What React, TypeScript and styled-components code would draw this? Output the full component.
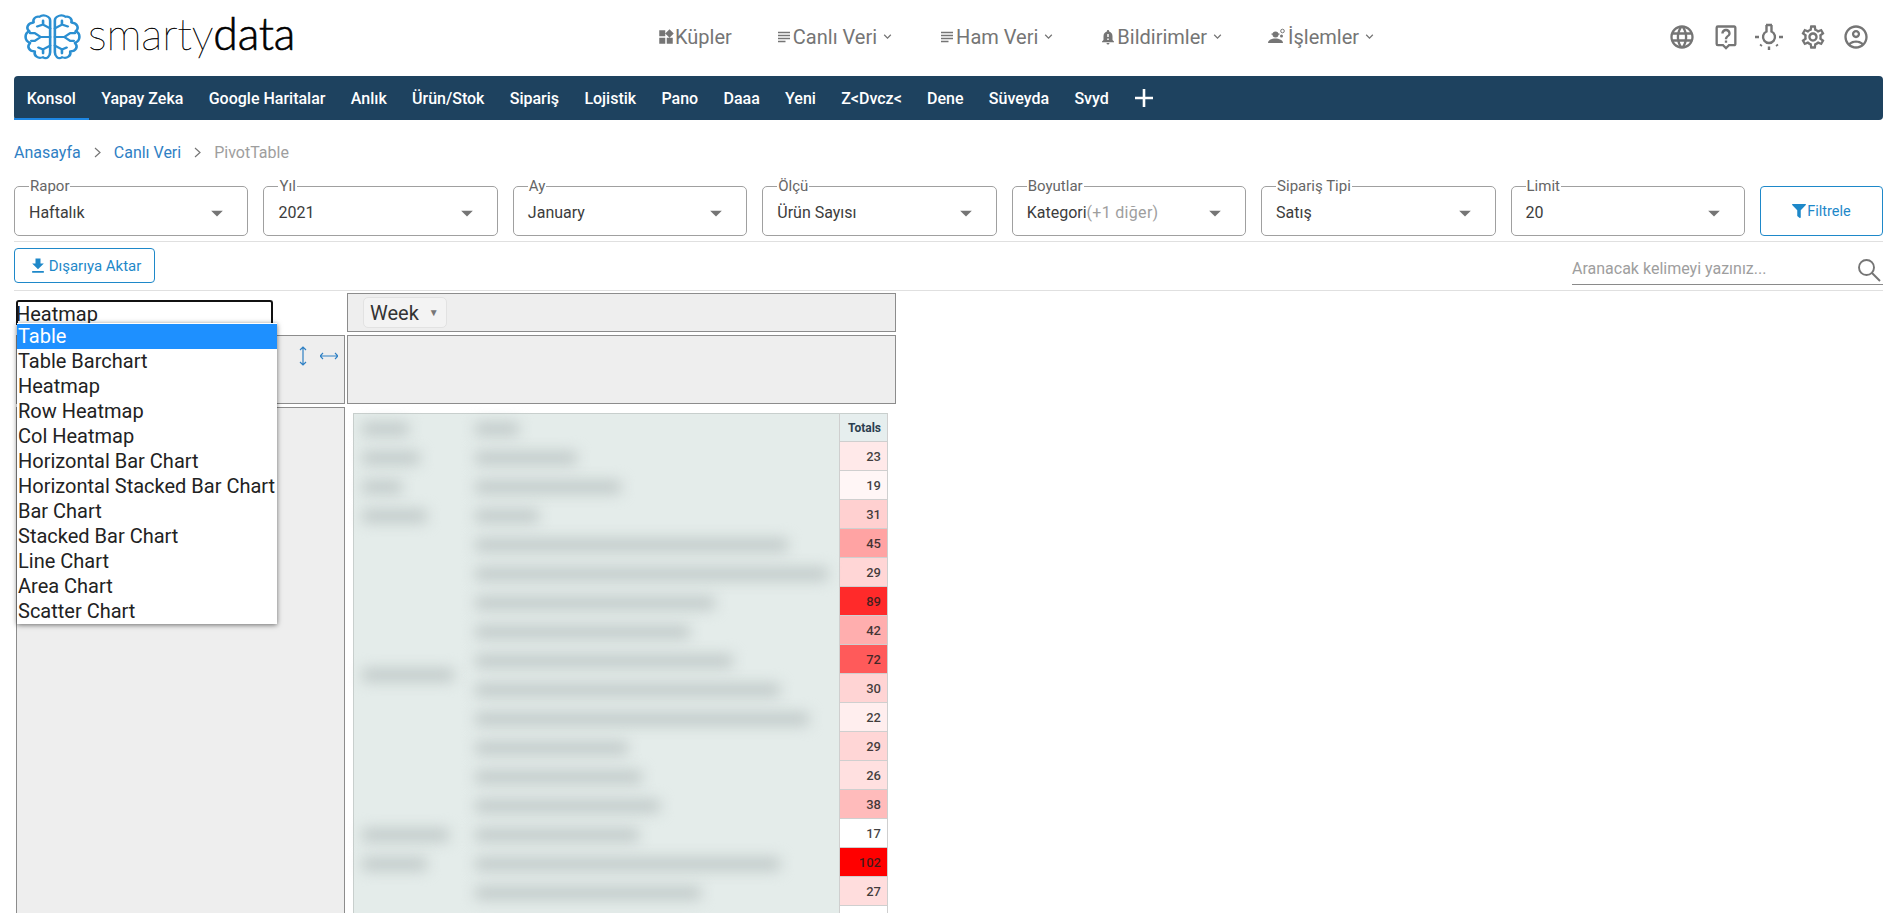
import React from 'react';
import styled, { createGlobalStyle } from 'styled-components';
import {
  MdArrowDropDown,
  MdFileDownload,
  MdKeyboardArrowDown,
  MdNotificationImportant,
  MdOutlineAccountCircle,
  MdOutlineLanguage,
  MdOutlineLiveHelp,
  MdOutlineSettings,
  MdSubject,
  MdWidgets,
} from 'react-icons/md';
import { FaFilter } from 'react-icons/fa';

const GlobalStyle = createGlobalStyle`
  html, body {
    margin: 0;
    height: 913px;
    overflow: hidden;
    background: #fff;
    font-family: Roboto, "Liberation Sans", sans-serif;
  }
`;

const Page = styled.div`
  height: 913px;
  overflow: hidden;
  padding: 0 10px 0 14px;
`;

const Header = styled.header`
  height: 76px;
  box-sizing: border-box;
  padding-bottom: 3px;
  display: flex;
  align-items: center;
  color: #757575;
`;

const Brand = styled.div`
  width: 271px;
  margin-left: 9px;
  display: flex;
  align-items: center;
  flex: none;
`;

const BrandMark = styled.svg`
  width: 59px;
  height: 48px;
  margin-right: 6px;
  flex: none;
`;

const BrandName = styled.span`
  font-family: Lato, sans-serif;
  font-size: 44.5px;
  font-weight: 100;
  line-height: 50px;
  color: #000;
  -webkit-text-stroke: 0.4px #000;
  letter-spacing: -0.2px;
  margin-top: -7px;
  strong {
    font-weight: 300;
    -webkit-text-stroke: 0.6px #000;
  }
`;

const Menu = styled.nav`
  display: flex;
  align-items: center;
  gap: 43px;
  margin-left: 363px;
`;

const MenuItem = styled.a`
  display: flex;
  align-items: center;
  font-size: 20px;
  color: #757575;
  svg {
    flex: none;
  }
`;

const MenuGlyph = styled.svg`
  width: 20px;
  height: 20px;
`;

const MenuChevron = styled(MdKeyboardArrowDown)`
  margin-left: 3px;
`;

const Tools = styled.div`
  margin-left: auto;
  margin-right: 13px;
  display: flex;
  align-items: center;
  gap: 15.5px;
  svg {
    display: block;
    width: 28px;
    height: 28px;
    color: #757575;
  }
`;

const TabBar = styled.div`
  height: 44px;
  background: #1e425f;
  border-radius: 4px;
  display: flex;
  align-items: stretch;
`;

const Tab = styled.a<{ $active?: boolean }>`
  display: flex;
  align-items: center;
  padding: 0 12.65px;
  font-size: 16px;
  font-weight: 500;
  color: #fff;
  border-bottom: 2px solid ${(p) => (p.$active ? '#1e88e5' : 'transparent')};
  border-top: 2px solid transparent;
`;

const AddTab = styled.svg`
  width: 20px;
  height: 20px;
  align-self: center;
  margin-left: 13px;
`;

const Crumbs = styled.div`
  height: 66px;
  display: flex;
  align-items: center;
  padding-bottom: 2px;
  box-sizing: border-box;
  font-size: 16px;
  color: #9e9e9e;
  a {
    color: #2f80c4;
  }
`;

const CrumbSep = styled.span`
  width: 33px;
  display: flex;
  justify-content: center;
  svg {
    display: block;
    width: 11px;
    height: 11px;
  }
`;

const FilterRow = styled.div`
  display: flex;
  gap: 15px;
  align-items: flex-end;
  padding-bottom: 5px;
  border-bottom: 1px solid #e0e0e0;
  height: 57px;
  box-sizing: border-box;
  margin-top: -1px;
`;

const Field = styled.fieldset`
  flex: 1;
  min-width: 0;
  margin: 0;
  box-sizing: border-box;
  border: 1px solid #a0a0a0;
  border-radius: 5px;
  padding: 0 5px 0 14px;
  display: flex;
  align-items: center;
  justify-content: space-between;
  color: #3c3c3c;
  font-size: 16px;
  height: 57px;
  svg {
    width: 28px;
    height: 28px;
    color: #757575;
    margin-right: 11px;
    margin-top: -3px;
    flex: none;
  }
`;

const FieldLabel = styled.legend`
  font-size: 15px;
  line-height: 15px;
  color: #666;
  padding: 0 1px;
  margin-left: 0;
`;

const FieldValue = styled.span`
  white-space: nowrap;
  margin-top: -4px;
  em {
    font-style: normal;
    color: #9e9e9e;
    letter-spacing: 0.3px;
  }
`;

const OutlineButton = styled.button`
  display: flex;
  align-items: center;
  justify-content: center;
  gap: 1px;
  background: #fff;
  border: 1px solid #1e88c9;
  border-radius: 4px;
  color: #1e88c9;
  font-family: inherit;
  font-size: 15px;
  padding: 0;
`;

const FilterButton = styled(OutlineButton)`
  width: 123px;
  height: 50px;
  flex: none;
  font-size: 14.5px;
  svg {
    width: 14px;
    height: 14px;
  }
`;

const ExportButton = styled(OutlineButton)`
  width: 141px;
  height: 35px;
  svg {
    width: 20px;
    height: 20px;
  }
`;

const ActionRow = styled.div`
  height: 49px;
  padding-top: 6px;
  box-sizing: border-box;
  display: flex;
  justify-content: space-between;
  border-bottom: 1px solid #e0e0e0;
`;

const SearchBox = styled.div`
  width: 311px;
  height: 37px;
  box-sizing: border-box;
  padding-top: 5px;
  border-bottom: 1px solid #8a8a8a;
  display: flex;
  align-items: center;
  justify-content: space-between;
  color: #9e9e9e;
  font-size: 16px;
`;

const SearchGlyph = styled.svg`
  width: 24px;
  height: 24px;
  margin-right: 2px;
  margin-top: 3px;
`;

const Pivot = styled.div`
  display: grid;
  grid-template-columns: 329px 549px;
  grid-template-rows: 39px 69px 520px;
  column-gap: 2px;
  row-gap: 3px;
  margin: 2px 0 0 2px;
`;

const RendererCell = styled.div`
  position: relative;
  padding-top: 7px;
`;

const RendererSelect = styled.div`
  width: 257px;
  height: 25px;
  box-sizing: border-box;
  border: 2px solid #111;
  border-bottom: 0;
  border-radius: 3px 3px 0 0;
  font-size: 20px;
  line-height: 24px;
  color: #222;
  text-indent: -2px;
`;

const RendererList = styled.ul`
  position: absolute;
  z-index: 2;
  left: 1px;
  top: 30px;
  width: 260px;
  margin: 0;
  padding: 1px 0 0;
  list-style: none;
  background: #fff;
  box-shadow: 0 1px 5px rgba(0, 0, 0, 0.55);
`;

const RendererOption = styled.li<{ $selected?: boolean }>`
  height: 25px;
  line-height: 25px;
  font-size: 20px;
  padding-left: 1px;
  white-space: nowrap;
  color: ${(p) => (p.$selected ? '#fff' : '#222')};
  background: ${(p) => (p.$selected ? '#1e90ff' : 'transparent')};
`;

const AxisBox = styled.div`
  background: #eee;
  border: 1px solid #8c8c8c;
  box-sizing: border-box;
`;

const ColsBox = styled(AxisBox)`
  padding: 3px 0 0 15px;
`;

const SortBox = styled(AxisBox)`
  display: flex;
  justify-content: flex-end;
  gap: 8px;
  padding: 10px 6px 0 0;
`;

const SortArrow = styled.svg`
  width: 18px;
  height: 20px;
`;

const FieldPill = styled.div`
  width: 84px;
  height: 31px;
  box-sizing: border-box;
  background: #f3f3f3;
  border: 1px solid #e2e2e2;
  border-radius: 5px;
  display: flex;
  align-items: center;
  gap: 10px;
  padding-left: 6px;
  font-size: 20px;
  color: #333;
  span {
    font-size: 10px;
    color: #777;
  }
`;

const OutputBox = styled.div`
  padding: 6px 0 0 6px;
  display: flex;
  align-items: flex-start;
`;

const Redacted = styled.div`
  width: 486px;
  display: grid;
  grid-template-columns: 112px 374px;
  grid-auto-rows: 29px;
  background: #e4ecea;
  border: 1px solid #c8cfcd;
  border-right: 0;
  box-sizing: border-box;
  height: 520px;
`;

const RedactedCell = styled.div<{ $span?: number }>`
  padding-left: 8px;
  display: flex;
  align-items: center;
  grid-column: 1;
  grid-row: ${(p) => (p.$span ? `span ${p.$span}` : 'auto')};
`;

const RedactedWideCell = styled(RedactedCell)`
  grid-column: 2;
  padding-left: 9px;
`;

const BlurBar = styled.div`
  height: 14px;
  background: #c2cbca;
  filter: blur(7px);
  border-radius: 4px;
`;

const TotalsColumn = styled.div`
  width: 49px;
  flex: none;
`;

const TotalCell = styled.div<{ $bg: string }>`
  height: 29px;
  box-sizing: border-box;
  border: 1px solid #cfcfcf;
  border-top: 0;
  background: ${(p) => p.$bg};
  color: rgba(30, 30, 30, 0.85);
  font-size: 13px;
  font-weight: 500;
  line-height: 29px;
  text-align: right;
  padding-right: 6px;
`;

const TotalsHead = styled(TotalCell)`
  border-top: 1px solid #c8cfcd;
  font-size: 12px;
  font-weight: 700;
  color: #2c3e50;
`;

const tabs = ['Yapay Zeka', 'Google Haritalar', 'Anlık', 'Ürün/Stok', 'Sipariş', 'Lojistik', 'Pano', 'Daaa', 'Yeni', 'Z<Dvcz<', 'Dene', 'Süveyda', 'Svyd'];

const filters = [
  { label: 'Rapor', value: 'Haftalık' },
  { label: 'Yıl', value: '2021' },
  { label: 'Ay', value: 'January' },
  { label: 'Ölçü', value: 'Ürün Sayısı' },
  { label: 'Boyutlar', value: 'Kategori', extra: '(+1 diğer)' },
  { label: 'Sipariş Tipi', value: 'Satış' },
  { label: 'Limit', value: '20' },
];

const renderers = ['Table', 'Table Barchart', 'Heatmap', 'Row Heatmap', 'Col Heatmap', 'Horizontal Bar Chart', 'Horizontal Stacked Bar Chart', 'Bar Chart', 'Stacked Bar Chart', 'Line Chart', 'Area Chart', 'Scatter Chart'];

const totals = [
  { value: '23', bg: '#ffe9e9' },
  { value: '19', bg: '#fff6f6' },
  { value: '31', bg: '#ffd0d0' },
  { value: '45', bg: '#ffa3a3' },
  { value: '29', bg: '#ffd6d6' },
  { value: '89', bg: '#ff2a2a' },
  { value: '42', bg: '#ffaeae' },
  { value: '72', bg: '#ff5a5a' },
  { value: '30', bg: '#ffd4d4' },
  { value: '22', bg: '#ffeeee' },
  { value: '29', bg: '#ffd6d6' },
  { value: '26', bg: '#ffe0e0' },
  { value: '38', bg: '#ffbbbb' },
  { value: '17', bg: '#ffffff' },
  { value: '102', bg: '#ff0000' },
  { value: '27', bg: '#ffdddd' },
  { value: '', bg: '#ffffff' },
];

// blurred-out row labels: first column bars, then the wide column bars, in px
const leadBars = [
  { width: 47 },
  { width: 58 },
  { width: 40 },
  { width: 65 },
  { width: 92, span: 10 },
  { width: 87 },
  { width: 65 },
];
const wideBars = [44, 102, 146, 64, 313, 353, 240, 215, 258, 305, 334, 153, 167, 185, 164, 305, 226];

const BrainLobe = () => (
  <g>
    <path d="M23 8C23 3 17 1 14 4 11 3 8 6 9 10 4 10 2 16 5.500 19 1 21 1 29 6 31 3 35 5 40 10 40 9 45 13 48 17 46 20 49 23 45 23 41Z" />
    <path d="M23 25H15L10 21H6M15 25L10 29H7M23 16L17 12V8M17 12L12 14M23 34L17 38V42M17 38L13 36" />
  </g>
);

const BulbIcon = () => (
  <svg viewBox="0 0 28 28" fill="none" stroke="currentColor" strokeWidth="2.4">
    <path d="M11 2H17M11.500 2V8.500A6 6 0 1 0 16.500 8.500V2" />
    <path d="M0 14H4M24 14H28M14 23.500V27M6.500 21.500L5.500 23M21.500 21.500L22.500 23" />
  </svg>
);

const App = (): React.ReactElement => {
  return (
    <Page>
      <GlobalStyle />
      <Header>
        <Brand>
          <BrandMark viewBox="0 0 50 50" preserveAspectRatio="none" fill="none" stroke="#2b8fd1" strokeWidth="2.2" strokeLinejoin="round" strokeLinecap="round">
            <BrainLobe />
            <g transform="matrix(-1 0 0 1 50 0)">
              <BrainLobe />
            </g>
          </BrandMark>
          <BrandName>
            smarty<strong>data</strong>
          </BrandName>
        </Brand>
        <Menu>
          <MenuItem>
            <MdWidgets size={18} />
            Küpler
          </MenuItem>
          <MenuItem>
            <MdSubject size={18} />
            Canlı Veri
            <MenuChevron size={15} />
          </MenuItem>
          <MenuItem>
            <MdSubject size={18} />
            Ham Veri
            <MenuChevron size={15} />
          </MenuItem>
          <MenuItem>
            <MdNotificationImportant size={18} />
            Bildirimler
            <MenuChevron size={15} />
          </MenuItem>
          <MenuItem>
            <MenuGlyph viewBox="0 0 20 20" fill="currentColor">
              <circle cx="7.500" cy="7.500" r="3" />
              <rect x="3.500" y="6.500" width="8" height="1.200" />
              <path d="M0 16c0-3 4-4.500 7.500-4.500S15 13 15 16z" />
              <circle cx="14.500" cy="4" r="1.800" fill="none" stroke="currentColor" />
              <circle cx="13.500" cy="9" r="1.500" />
            </MenuGlyph>
            İşlemler
            <MenuChevron size={15} />
          </MenuItem>
        </Menu>
        <Tools>
          <MdOutlineLanguage />
          <MdOutlineLiveHelp />
          <BulbIcon />
          <MdOutlineSettings />
          <MdOutlineAccountCircle />
        </Tools>
      </Header>

      <TabBar>
        <Tab $active>Konsol</Tab>
        {tabs.map((tab) => (
          <Tab key={tab}>{tab}</Tab>
        ))}
        <AddTab viewBox="0 0 20 20" stroke="#fff" strokeWidth="2.6">
          <path d="M10 1V19M1 10H19" />
        </AddTab>
      </TabBar>

      <Crumbs>
        <a>Anasayfa</a>
        <CrumbSep>
          <svg viewBox="0 0 11 11" fill="none" stroke="#757575" strokeWidth="1.200">
            <path d="M3 1L8 5.500L3 10" />
          </svg>
        </CrumbSep>
        <a>Canlı Veri</a>
        <CrumbSep>
          <svg viewBox="0 0 11 11" fill="none" stroke="#757575" strokeWidth="1.200">
            <path d="M3 1L8 5.500L3 10" />
          </svg>
        </CrumbSep>
        PivotTable
      </Crumbs>

      <FilterRow>
        {filters.map((filter) => (
          <Field key={filter.label}>
            <FieldLabel>{filter.label}</FieldLabel>
            <FieldValue>
              {filter.value}
              {filter.extra && <em>{filter.extra}</em>}
            </FieldValue>
            <MdArrowDropDown />
          </Field>
        ))}
        <FilterButton>
          <FaFilter />
          Filtrele
        </FilterButton>
      </FilterRow>

      <ActionRow>
        <ExportButton>
          <MdFileDownload />
          Dışarıya Aktar
        </ExportButton>
        <SearchBox>
          Aranacak kelimeyi yazınız...
          <SearchGlyph viewBox="0 0 24 24" fill="none" stroke="#757575" strokeWidth="1.900">
            <circle cx="9.500" cy="9.500" r="7.500" />
            <path d="M15 15L23 23" />
          </SearchGlyph>
        </SearchBox>
      </ActionRow>

      <Pivot>
        <RendererCell>
          <RendererSelect>Heatmap</RendererSelect>
          <RendererList>
            {renderers.map((name, index) => (
              <RendererOption key={name} $selected={index === 0}>
                {name}
              </RendererOption>
            ))}
          </RendererList>
        </RendererCell>
        <ColsBox>
          <FieldPill>
            Week <span>▼</span>
          </FieldPill>
        </ColsBox>
        <SortBox>
          <SortArrow viewBox="0 0 18 20" fill="none" stroke="#2f80c4" strokeWidth="1.200">
            <path d="M9 1V19M6 4L9 1L12 4M6 16L9 19L12 16" />
          </SortArrow>
          <SortArrow viewBox="0 0 18 20" fill="none" stroke="#2f80c4" strokeWidth="1.200">
            <path d="M0 10H18M3 7L0 10L3 13M15 7L18 10L15 13" />
          </SortArrow>
        </SortBox>
        <AxisBox />
        <AxisBox />
        <OutputBox>
          <Redacted>
            {leadBars.map((bar) => (
              <RedactedCell key={bar.width} $span={bar.span}>
                <BlurBar style={{ width: bar.width }} />
              </RedactedCell>
            ))}
            {wideBars.map((width, index) => (
              <RedactedWideCell key={index} style={{ gridRow: index + 1 }}>
                <BlurBar style={{ width }} />
              </RedactedWideCell>
            ))}
          </Redacted>
          <TotalsColumn>
            <TotalsHead $bg="#e6eeee">Totals</TotalsHead>
            {totals.map((total, index) => (
              <TotalCell key={index} $bg={total.bg}>
                {total.value}
              </TotalCell>
            ))}
          </TotalsColumn>
        </OutputBox>
      </Pivot>
    </Page>
  );
};

export default App;
